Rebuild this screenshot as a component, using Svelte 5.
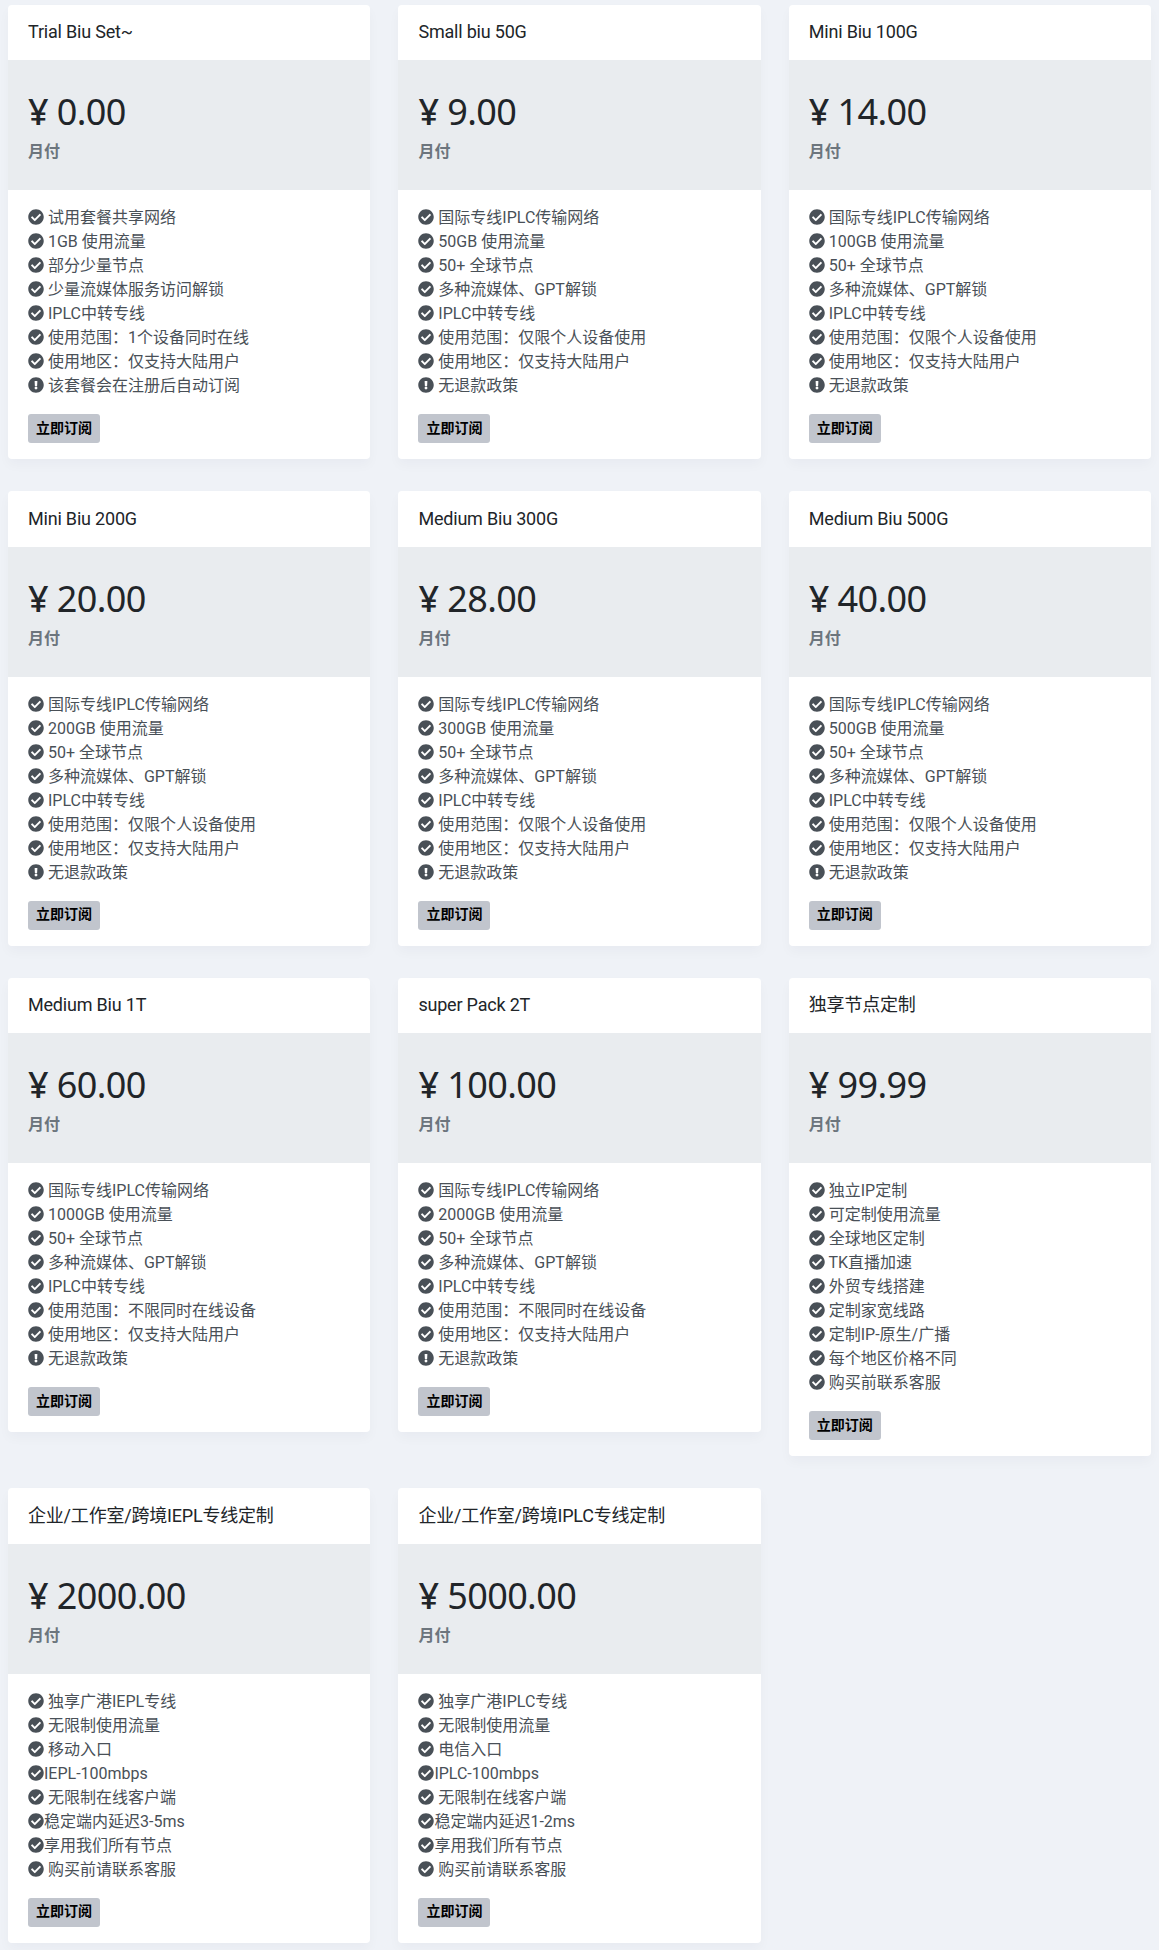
<script>
  const common = (gb, scope) => [
    [0, ' 国际专线IPLC传输网络'],
    [0, ' ' + gb + ' 使用流量'],
    [0, ' 50+ 全球节点'],
    [0, ' 多种流媒体、GPT解锁'],
    [0, ' IPLC中转专线'],
    [0, ' 使用范围：' + scope],
    [0, ' 使用地区：仅支持大陆用户'],
    [1, ' 无退款政策']
  ];
  const one = '仅限个人设备使用';
  const all = '不限同时在线设备';
  const ent = (a, b, c) => [
    [0, ' 独享广港' + a + '专线'],
    [0, ' 无限制使用流量'],
    [0, ' ' + b + '入口'],
    [0, a + '-100mbps'],
    [0, ' 无限制在线客户端'],
    [0, '稳定端内延迟' + c + 'ms'],
    [0, '享用我们所有节点'],
    [0, ' 购买前请联系客服']
  ];
  const plans = [
    { t: 'Trial Biu Set~', p: '0.00', items: [
      [0, ' 试用套餐共享网络'], [0, ' 1GB 使用流量'], [0, ' 部分少量节点'], [0, ' 少量流媒体服务访问解锁'],
      [0, ' IPLC中转专线'], [0, ' 使用范围：1个设备同时在线'], [0, ' 使用地区：仅支持大陆用户'], [1, ' 该套餐会在注册后自动订阅']
    ] },
    { t: 'Small biu 50G', p: '9.00', items: common('50GB', one) },
    { t: 'Mini Biu 100G', p: '14.00', items: common('100GB', one) },
    { t: 'Mini Biu 200G', p: '20.00', items: common('200GB', one) },
    { t: 'Medium Biu 300G', p: '28.00', items: common('300GB', one) },
    { t: 'Medium Biu 500G', p: '40.00', items: common('500GB', one) },
    { t: 'Medium Biu 1T', p: '60.00', items: common('1000GB', all) },
    { t: 'super Pack 2T', p: '100.00', items: common('2000GB', all) },
    { t: '独享节点定制', p: '99.99', items: [
      [0, ' 独立IP定制'], [0, ' 可定制使用流量'], [0, ' 全球地区定制'], [0, ' TK直播加速'], [0, ' 外贸专线搭建'],
      [0, ' 定制家宽线路'], [0, ' 定制IP-原生/广播'], [0, ' 每个地区价格不同'], [0, ' 购买前联系客服']
    ] },
    { t: '企业/工作室/跨境IEPL专线定制', p: '2000.00', items: ent('IEPL', '移动', '3-5') },
    { t: '企业/工作室/跨境IPLC专线定制', p: '5000.00', items: ent('IPLC', '电信', '1-2') }
  ];
</script>

<main class="grid">
  {#each plans as plan}
    <section class="card">
      <header class="head">{plan.t}</header>
      <div class="price">
        <div class="amount"><span class="yen">¥</span> {plan.p}</div>
        <div class="cycle">月付</div>
      </div>
      <div class="body">
        <ul>
          {#each plan.items as [warn, text]}
            <li>
              <svg viewBox="0 0 512 512" class="icon" aria-hidden="true">
                {#if warn}
                  <path d="M504 256c0 136.997-111.043 248-248 248S8 392.997 8 256C8 119.083 119.043 8 256 8s248 111.083 248 248zm-248 50c-25.405 0-46 20.595-46 46s20.595 46 46 46 46-20.595 46-46-20.595-46-46-46zm-43.673-165.346l7.418 136c.347 6.364 5.609 11.346 11.982 11.346h48.546c6.373 0 11.635-4.982 11.982-11.346l7.418-136c.375-6.874-5.098-12.654-11.982-12.654h-63.383c-6.884 0-12.356 5.78-11.981 12.654z" />
                {:else}
                  <path d="M504 256c0 136.967-111.033 248-248 248S8 392.967 8 256 119.033 8 256 8s248 111.033 248 248zM227.314 387.314l184-184c6.248-6.248 6.248-16.379 0-22.627l-22.627-22.627c-6.248-6.249-16.379-6.249-22.628 0L216 308.118l-70.059-70.059c-6.248-6.248-16.379-6.248-22.628 0l-22.627 22.627c-6.248 6.248-6.248 16.379 0 22.627l104 104c6.249 6.249 16.379 6.249 22.628.001z" />
                {/if}
              </svg>{text}
            </li>
          {/each}
        </ul>
        <button type="button">立即订阅</button>
      </div>
    </section>
  {/each}
</main>

<style>
  :global(body) {
    margin: 0;
    background: #eff2f7;
  }
  .grid {
    display: grid;
    grid-template-columns: repeat(3, 362.4px);
    column-gap: 28px;
    row-gap: 32px;
    align-items: start;
    padding: 4.67px 0 7px 8px;
    font-family: Roboto, "Noto Sans CJK SC", sans-serif;
    font-size: 16px;
    line-height: 24px;
    color: #495057;
  }
  .card {
    background: #fff;
    border-radius: 4px;
    overflow: hidden;
    box-shadow: 0 6px 12px rgba(18, 38, 63, 0.03);
  }
  .head {
    height: 55.5px;
    box-sizing: border-box;
    padding: 0 20px;
    display: flex;
    align-items: center;
    font-size: 18px;
    letter-spacing: -0.2px;
    color: #212529;
  }
  .price {
    height: 130px;
    box-sizing: border-box;
    padding: 25px 20px 0;
    background: #e9ecef;
  }
  .amount {
    font-family: "Noto Sans", sans-serif;
    font-size: 36px;
    line-height: 54px;
    letter-spacing: -0.6px;
    color: #212529;
  }
  .yen {
    font-weight: 500;
  }
  .cycle {
    font-weight: 700;
    color: #6c757d;
    line-height: 24px;
    margin-top: 1px;
  }
  .body {
    padding: 16px 20px;
  }
  ul {
    list-style: none;
    margin: 0 0 16px;
    padding: 0;
  }
  li {
    height: 24px;
    line-height: 23px;
    white-space: nowrap;
  }
  .icon {
    width: 16px;
    height: 16px;
    fill: #495057;
    vertical-align: -2px;
  }
  button {
    display: block;
    width: 72px;
    height: 29px;
    padding: 0 0 2px;
    border: 0;
    border-radius: 3px;
    background: #c1c5cd;
    color: #000;
    font: 700 14px/1 Roboto, "Noto Sans CJK SC", sans-serif;
  }
</style>
